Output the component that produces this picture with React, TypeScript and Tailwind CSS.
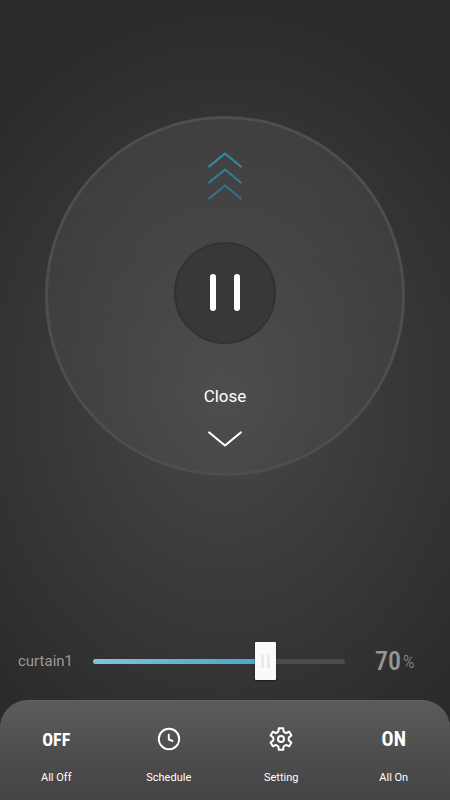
import React, { useState } from 'react';

const Chevron: React.FC<{ className?: string }> = ({ className }) => (
  <svg viewBox="0 0 36 18" fill="none" stroke="currentColor" strokeWidth="2.2" strokeLinecap="round" strokeLinejoin="round" className={className} aria-hidden="true">
    <path d="M2.2 15.5 18 2.5l15.8 13" />
  </svg>
);

const ClockIcon = () => (
  <svg viewBox="0 0 24 24" className="h-6 w-6" fill="none" stroke="currentColor" strokeWidth="1.9" strokeLinecap="round" strokeLinejoin="round" aria-hidden="true">
    <circle cx="12" cy="12" r="10.2" />
    <path d="M11.8 7.6v4.9l3.8 1.5" />
  </svg>
);

const GearIcon = () => (
  <svg viewBox="0 0 24 24" className="h-6 w-6" fill="none" stroke="currentColor" strokeWidth="2" strokeLinejoin="round" aria-hidden="true">
    <path d="M9.4 4.4 9.8 1.2H14.2L14.6 4.4Q15.6 5.8 17.3 6L20.2 4.7 22.4 8.5 19.9 10.4Q19.2 12 19.9 13.6L22.4 15.5 20.2 19.3 17.3 18Q15.6 18.2 14.6 19.6L14.2 22.8H9.8L9.4 19.6Q8.4 18.2 6.7 18L3.8 19.3 1.6 15.5 4.1 13.6Q4.8 12 4.1 10.4L1.6 8.5 3.8 4.7 6.7 6Q8.4 5.8 9.4 4.4Z" />
    <circle cx="12" cy="12" r="3" />
  </svg>
);

const narrow = "font-['Roboto_Condensed','Liberation_Sans_Narrow','DejaVu_Sans_Condensed',sans-serif]";

const App: React.FC = () => {
  const [position, setPosition] = useState(70);

  const actions = [
    { label: 'All Off', icon: <span className={`text-[18px] font-bold ${narrow}`}>OFF</span> },
    { label: 'Schedule', icon: <ClockIcon /> },
    { label: 'Setting', icon: <GearIcon /> },
    { label: 'All On', icon: <span className={`text-[20px] font-bold ${narrow}`}>ON</span> }
  ];

  return (
    <div className="flex min-h-screen flex-col bg-[#2b2b2b] bg-[radial-gradient(ellipse_320px_400px_at_50%_400px,#474747,#2b2b2b)] font-[Roboto,sans-serif] text-white">
      <main className="flex flex-1 flex-col justify-between gap-10 pt-[116px] pb-[19px]">
        <section className="mx-auto flex aspect-square w-4/5 flex-col items-center justify-between rounded-full border-3 border-[#4e4e4e] bg-linear-to-b from-white/6 to-white/3 bg-origin-border pt-8 pb-[25px]">
          <button aria-label="Open" className="flex flex-col items-center text-[#2f8ba8]">
            <Chevron className="h-[18px] w-9" />
            <Chevron className="-mt-0.5 h-[18px] w-9 opacity-85" />
            <Chevron className="-mt-0.5 h-[18px] w-9 opacity-65" />
          </button>
          <button aria-label="Pause" className="flex h-[102px] w-[102px] items-center justify-center gap-[18px] rounded-full border-2 border-[#323232] bg-[#383838]">
            <span className="h-[37px] w-[6px] rounded-full bg-white" />
            <span className="h-[37px] w-[6px] rounded-full bg-white" />
          </button>
          <button className="flex flex-col items-center gap-[22px] text-[17px] leading-6">
            Close
            <Chevron className="h-[18px] w-9 rotate-180" />
          </button>
        </section>

        <section className="flex h-10 items-center px-[18px]">
          <label htmlFor="curtain1" className="w-[75px] text-[15px] text-[#9b9b9b]">curtain1</label>
          <input
            id="curtain1"
            type="range" min="0" max="100" value={position}
            onChange={(e) => setPosition(parseInt(e.target.value))}
            className="h-[5px] min-w-0 flex-1 cursor-pointer appearance-none rounded-full outline-none [&::-webkit-slider-thumb]:h-[38px] [&::-webkit-slider-thumb]:w-[21px] [&::-webkit-slider-thumb]:appearance-none [&::-webkit-slider-thumb]:rounded-[1px] [&::-webkit-slider-thumb]:bg-[#fafafa] [&::-webkit-slider-thumb]:bg-[linear-gradient(90deg,#e8eaee_3px,transparent_3px,transparent_6px,#e8eaee_6px)] [&::-webkit-slider-thumb]:bg-[length:9px_13px] [&::-webkit-slider-thumb]:bg-center [&::-webkit-slider-thumb]:bg-no-repeat [&::-webkit-slider-thumb]:shadow-[0_1px_2px_#00000080]"
            style={{ background: `linear-gradient(90deg, #7fc4dc, #45a5c8 ${position}%, #4c4c4c ${position}%)` }}
          />
          <output htmlFor="curtain1" className={`ml-[30px] flex w-[57px] items-center gap-0.5 text-[#969696] ${narrow}`}>
            <span className="text-[26px] font-medium">{position}</span>
            <span className="text-[18px] font-light">%</span>
          </output>
        </section>
      </main>

      <nav className="grid grid-cols-4 rounded-t-[28px] border-t border-[#626262] bg-linear-to-b from-[#5b5b5b] to-[#434343] pt-[25px] pb-[14px]">
        {actions.map(action => (
          <button key={action.label} className="flex flex-col items-center gap-[18px]">
            <span className="flex h-[26px] items-center">{action.icon}</span>
            <span className="text-[11px] leading-4">{action.label}</span>
          </button>
        ))}
      </nav>
    </div>
  );
};

export default App;
